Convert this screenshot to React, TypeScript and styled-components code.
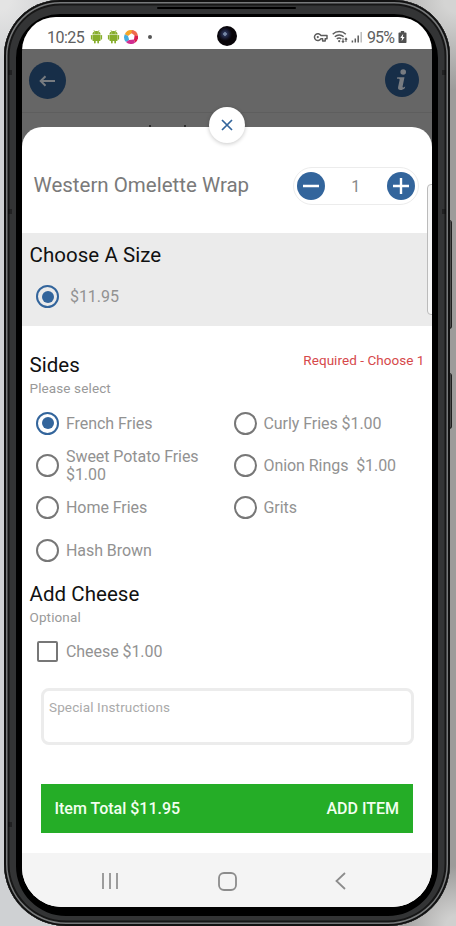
import React, { useState } from "react";
import styled, { createGlobalStyle } from "styled-components";

const blue = "#33659c";

const GlobalStyle = createGlobalStyle`
  * { box-sizing: border-box; }
  body {
    margin: 0;
    width: 456px;
    height: 926px;
    overflow: hidden;
    font-family: Roboto, "Liberation Sans", sans-serif;
    background: #cfd0d1;
  }
  button { font: inherit; border: 0; padding: 0; cursor: pointer; }
`;

const Backdrop = styled.div`
  position: relative;
  width: 456px;
  height: 926px;
  padding: 0 6px 0 4px;
  overflow: hidden;
  background: linear-gradient(90deg, #cfd1d3 0 50%, #9c9b9a 50%);
  &::before {
    content: "";
    position: absolute;
    inset: 0;
    background:
      radial-gradient(circle at 100% 0, #d4d4d3 12px, transparent 90px),
      radial-gradient(circle at 100% 100%, #d0d0cf 10px, transparent 60px),
      radial-gradient(circle at 0 0, #e4e4e4 10px, transparent 60px);
  }
`;

const Phone = styled.div`
  position: relative;
  width: 446px;
  height: 926px;
  padding: 17px 18px 19px;
  border-radius: 56px 56px 62px 62px;
  background: #000;
  box-shadow:
    inset 0 0 0 2px #111,
    inset 0 0 0 3.5px #77797a,
    inset 0 0 0 5.5px #161616,
    inset 0 2px 0 12px #333435;
`;

const Speaker = styled.span`
  position: absolute;
  left: 153px;
  top: 7px;
  width: 139px;
  height: 2px;
  border-radius: 2px;
  background: #000;
`;

const SideKey = styled.span<{ $top: number; $height: number }>`
  position: absolute;
  left: 448px;
  top: ${(p) => p.$top}px;
  width: 4px;
  height: ${(p) => p.$height}px;
  border-radius: 0 3px 3px 0;
  border: 1px solid #1d1d1d;
  border-left: 2px solid #080808;
  background: #4c4c4c;
`;

const Seam = styled.span<{ $left: number; $top: number }>`
  position: absolute;
  left: ${(p) => p.$left}px;
  top: ${(p) => p.$top}px;
  width: 4px;
  height: 5px;
  background: rgba(10, 10, 10, 0.45);
`;

const Screen = styled.div`
  position: relative;
  display: flex;
  flex-direction: column;
  width: 410px;
  height: 890px;
  border-radius: 34px 34px 40px 40px;
  overflow: hidden;
  background: #666;
`;

const StatusBar = styled.header`
  display: flex;
  justify-content: space-between;
  height: 32px;
  padding: 5px 25px 0 25px;
  background: #fff;
  color: #606060;
`;

const StatusGroup = styled.div`
  display: flex;
  align-items: center;
  height: 30px;
`;

const StatusText = styled.span<{ $track?: number }>`
  font-size: 16px;
  letter-spacing: ${(p) => p.$track ?? 0}px;
`;

const Camera = styled.span`
  position: absolute;
  left: 195px;
  top: 9px;
  width: 20px;
  height: 20px;
  border-radius: 50%;
  background: radial-gradient(circle at 8px 8px, #7688a5 0 1.5px, #2a3458 2px, #131425 5px, #080509 7px);
`;

const AppBar = styled.div`
  display: flex;
  flex: none;
  justify-content: space-between;
  height: 64px;
  padding: 13px 13.5px 0 7px;
  border-bottom: 1px solid #5e5e5e;
`;

const RoundButton = styled.button<{ $size: number; $tone: string }>`
  display: flex;
  flex: none;
  align-items: center;
  justify-content: center;
  width: ${(p) => p.$size}px;
  height: ${(p) => p.$size}px;
  border-radius: 50%;
  background: ${(p) => p.$tone};
`;

const InfoButton = styled(RoundButton)`
  margin-top: 1px;
`;

/* The page behind the sheet, with the tops of its heading's letters showing. */
const PageStrip = styled.div`
  display: flex;
  flex: none;
  align-items: flex-end;
  gap: 33px;
  height: 14px;
  padding: 0 0 0 127px;
`;

const LetterTop = styled.span`
  width: 2px;
  height: 2px;
  background: #2c2c2c;
`;

const Sheet = styled.main`
  position: relative;
  display: flex;
  flex: 1;
  flex-direction: column;
  border-radius: 20px 20px 0 0;
  background: #fff;
`;

const CloseButton = styled(RoundButton)`
  position: absolute;
  left: 187px;
  top: -20px;
  box-shadow: 0 1px 4px rgba(0, 0, 0, 0.22);
`;

const EdgePanel = styled.span`
  position: absolute;
  right: -3px;
  top: 57px;
  width: 8px;
  height: 131px;
  border: 1px solid #bbb;
  border-radius: 4px 0 0 4px;
  background: #f6f6f6;
`;

const TitleRow = styled.div`
  display: flex;
  align-items: center;
  justify-content: space-between;
  height: 105.5px;
  padding: 13px 13.5px 0 11.5px;
`;

const ItemTitle = styled.h1`
  margin: 0;
  padding-bottom: 3px;
  color: #7a7a7a;
  font-size: 20.5px;
  font-weight: 400;
  white-space: nowrap;
`;

const Stepper = styled.div`
  display: flex;
  align-items: center;
  justify-content: space-between;
  width: 125.5px;
  height: 38px;
  padding: 0 3px;
  border: 1px solid #ececec;
  border-radius: 19px;
  color: #888;
  font-size: 16px;
`;

const SizeSection = styled.section`
  height: 93.5px;
  padding: 10.5px 7.5px 0;
  background: #ebebeb;
`;

const Section = styled.section<{ $gap: number }>`
  padding: ${(p) => p.$gap}px 7.5px 0;
`;

const SectionHead = styled.div`
  display: flex;
  justify-content: space-between;
`;

const Heading = styled.h2`
  margin: 0;
  color: #111;
  font-size: 20.5px;
  line-height: 24px;
  font-weight: 400;
  letter-spacing: 0.05px;
`;

const Required = styled.span`
  color: #d6494b;
  font-size: 13.5px;
  line-height: 15px;
  letter-spacing: 0.05px;
`;

const Hint = styled.p`
  margin: 3px 0 0;
  color: #999;
  font-size: 13.5px;
  line-height: 16px;
  letter-spacing: 0.12px;
`;

const OptionGrid = styled.div`
  display: grid;
  grid-template-columns: 197.5px 1fr;
  grid-auto-rows: 42.3px;
  margin-top: 6px;
`;

const Option = styled.label<{ $gap?: number }>`
  display: flex;
  align-items: center;
  gap: ${(p) => p.$gap ?? 7}px;
  padding-left: 6.5px;
  color: #929292;
  font-size: 16px;
  line-height: 18.5px;
  letter-spacing: -0.06px;
  cursor: pointer;
`;

const OptionText = styled.span`
  padding-top: 2px;
  white-space: pre;
`;

const Radio = styled.span<{ $on: boolean }>`
  display: flex;
  flex: none;
  align-items: center;
  justify-content: center;
  width: 23px;
  height: 23px;
  border: 2px solid ${(p) => (p.$on ? blue : "#777")};
  border-radius: 50%;
  &::after {
    content: "";
    width: 12px;
    height: 12px;
    border-radius: 50%;
    background: ${(p) => (p.$on ? blue : "transparent")};
  }
`;

const SizeOption = styled(Option)`
  height: 23px;
  margin-top: 18px;
`;

const CheckOption = styled(Option)`
  height: 22px;
  margin-top: 15.5px;
`;

const Checkbox = styled.span`
  width: 21px;
  height: 21px;
  margin: 0 1px;
  border: 2px solid #777;
  border-radius: 2px;
`;

const Notes = styled.textarea`
  display: block;
  width: 373px;
  height: 57px;
  margin: 26px 0 0 18.5px;
  padding: 8px 5.5px;
  border: 3px solid #ececec;
  border-radius: 8px;
  outline: 0;
  resize: none;
  background: #fff;
  font: 13.5px/16px Roboto, sans-serif;
  letter-spacing: 0.13px;
  &::placeholder { color: #aaa; opacity: 1; }
`;

const TotalButton = styled.button`
  display: flex;
  align-items: center;
  justify-content: space-between;
  width: 372.5px;
  height: 49px;
  margin: 38.5px 0 0 18.5px;
  padding: 1px 14px 0;
  background: #25ad27;
  color: #f2fff0;
  font-size: 16px;
  font-weight: 500;
`;

const NavBar = styled.nav`
  display: flex;
  align-items: center;
  justify-content: space-between;
  height: 54px;
  margin-top: auto;
  padding: 2px 86px 0 79px;
  background: #f4f4f4;
`;

const Android = () => (
  <svg width="13" height="14" viewBox="0 0 13 14" fill="#86ad2b">
    <path d="M2.4 4.5a4.1 3.6 0 0 1 8.2 0zM2.4 5h8.2v5.2a.8.8 0 0 1-.8.8H3.2a.8.8 0 0 1-.8-.8z" />
    <rect x=".9" y="5" width="1.2" height="4.6" rx=".6" />
    <rect x="10.9" y="5" width="1.2" height="4.6" rx=".6" />
    <rect x="4" y="10" width="1.7" height="3.6" rx=".8" />
    <rect x="7.3" y="10" width="1.7" height="3.6" rx=".8" />
    <path d="M3.8 0l1 1.8M9.2 0l-1 1.8" stroke="#86ad2b" strokeWidth=".6" />
    <circle cx="4.8" cy="3" r=".45" fill="#fff" />
    <circle cx="8.2" cy="3" r=".45" fill="#fff" />
  </svg>
);

const Swirl = () => (
  <svg width="14" height="14" viewBox="0 0 14 14">
    <path d="M7 0A7 7 0 0 0 .8 4.2L4 6l4-3 2-2.4A7 7 0 0 0 7 0z" fill="#f5a62a" />
    <path d="M.8 4.2A7 7 0 0 0 2 12l3.2-2L4 6z" fill="#45aee0" />
    <path d="M2 12a7 7 0 0 0 9 .7L10 9.5 5.2 10z" fill="#d02d91" />
    <path d="M11 12.7A7 7 0 0 0 14 6l-3.3-1.4L10 9.5z" fill="#d91e4f" />
    <path d="M14 6A7 7 0 0 0 8 0l-.7 3 3.4 2.6z" fill="#ef6b4c" />
    <circle cx="7.2" cy="6.8" r="2.4" fill="#fff" />
  </svg>
);

const IconStrip = styled.div`
  display: flex;
  align-items: center;
  gap: 4px;
  margin-left: 6px;
`;

const Dot = styled.span`
  width: 4px;
  height: 4px;
  margin-left: 6px;
  border-radius: 50%;
  background: #555;
`;

const StatusIcons = () => (
  <svg width="54" height="16" viewBox="0 0 54 16" fill="none" stroke="#5c5c5c" strokeWidth="1.5">
    <path d="M7.8 6.4A3.4 3.4 0 1 0 7.8 9.8H9.6V12H12.2V9.8H14V6.4z" strokeLinejoin="round" />
    <circle cx="4.8" cy="8.1" r="1.1" fill="#5c5c5c" stroke="none" />
    <path d="M19.7 5.2a9.5 9.5 0 0 1 13.1 0M21.8 7.7a6.4 6.4 0 0 1 8.8 0M23.8 10a3.4 3.4 0 0 1 4.5 0" />
    <circle cx="26.2" cy="12.2" r="1.1" fill="#5c5c5c" stroke="none" />
    <path d="M30 9.2v4M28.8 12l1.2 1.4L31.2 12M33 13V9.4M31.8 10.6L33 9.2l1.2 1.4" strokeWidth="1.1" />
    <path d="M39.4 11.5v2M42.3 9.5v4M45.2 6.5v7" strokeWidth="1.5" />
    <path d="M48.2 3v10.5" stroke="#bbb" strokeWidth="1.5" />
  </svg>
);

const BatteryIcon = styled.svg`
  margin-left: 4px;
`;

const Battery = () => (
  <BatteryIcon width="9" height="14" viewBox="0 0 9 14">
    <path d="M2.8 1h3.4v1.4h1.5q.8 0 .8.8v9q0 .8-.8.8H1.3q-.8 0-.8-.8v-9q0-.8.8-.8h1.5z" fill="#515151" />
    <path d="M5.2 3.8L2.3 8.1h1.8l-.5 3.2 3-4.4H4.8z" fill="#fff" />
  </BatteryIcon>
);

const sides = [
  "French Fries",
  "Curly Fries $1.00",
  "Sweet Potato Fries\n$1.00",
  "Onion Rings  $1.00",
  "Home Fries",
  "Grits",
  "Hash Brown",
];

export default function App() {
  const [side, setSide] = useState(0);
  const [count, setCount] = useState(1);

  return (
    <>
      <GlobalStyle />
      <Backdrop>
        <SideKey $top={220} $height={109} />
        <SideKey $top={373} $height={56} />
        <Phone>
          <Speaker />
          <Seam $left={4} $top={70} />
          <Seam $left={4} $top={209} />
          <Seam $left={438} $top={70} />
          <Seam $left={438} $top={209} />
          <Seam $left={4} $top={822} />
          <Screen>
            <StatusBar>
              <StatusGroup>
                <StatusText $track={-0.55}>10:25</StatusText>
                <IconStrip>
                  <Android />
                  <Android />
                  <Swirl />
                  <Dot />
                </IconStrip>
              </StatusGroup>
              <StatusGroup>
                <StatusIcons />
                <StatusText $track={-0.9}>95%</StatusText>
                <Battery />
              </StatusGroup>
              <Camera />
            </StatusBar>
            <AppBar>
              <RoundButton $size={37} $tone="#172e48" aria-label="Back">
                <svg width="17" height="12" viewBox="0 0 17 12" fill="none" stroke="#777b80" strokeWidth="2">
                  <path d="M16 6H2M6.5 1.2L1.7 6l4.8 4.8" />
                </svg>
              </RoundButton>
              <InfoButton $size={34} $tone="#172e48" aria-label="Information">
                <svg width="14" height="24" viewBox="0 0 14 24" fill="#777b80">
                  <circle cx="8.2" cy="4" r="2.8" />
                  <path d="M2.2 9.2h7.3L7.6 18.6q-.2 1.2.8.9l1.8-1-.4 1.8c-1.4 1-2.7 1.8-4.3 1.8-2 0-2.8-1.2-2.4-3l1.5-7.2q.2-1.1-.9-1.1H1.9z" />
                </svg>
              </InfoButton>
            </AppBar>
            <PageStrip>
              <LetterTop />
              <LetterTop />
            </PageStrip>
            <Sheet>
              <CloseButton $size={36} $tone="#fff" aria-label="Close">
                <svg width="12" height="12" viewBox="0 0 12 12" stroke={blue} strokeWidth="1.7">
                  <path d="M1 1l10 10M11 1L1 11" />
                </svg>
              </CloseButton>
              <TitleRow>
                <ItemTitle>Western Omelette Wrap</ItemTitle>
                <Stepper>
                  <RoundButton $size={28} $tone={blue} aria-label="Less" onClick={() => setCount(Math.max(1, count - 1))}>
                    <svg width="16" height="16" stroke="#fff" strokeWidth="2.4"><path d="M0 8h16" /></svg>
                  </RoundButton>
                  {count}
                  <RoundButton $size={28} $tone={blue} aria-label="More" onClick={() => setCount(count + 1)}>
                    <svg width="16" height="16" stroke="#fff" strokeWidth="2.4"><path d="M0 8h16M8 0v16" /></svg>
                  </RoundButton>
                </Stepper>
              </TitleRow>
              <SizeSection>
                <Heading>Choose A Size</Heading>
                <SizeOption $gap={11}>
                  <Radio $on />
                  <OptionText>$11.95</OptionText>
                </SizeOption>
              </SizeSection>
              <Section $gap={27}>
                <SectionHead>
                  <Heading>Sides</Heading>
                  <Required>Required - Choose 1</Required>
                </SectionHead>
                <Hint>Please select</Hint>
                <OptionGrid>
                  {sides.map((label, i) => (
                    <Option key={label} onClick={() => setSide(i)}>
                      <Radio $on={i === side} />
                      <OptionText>{label}</OptionText>
                    </Option>
                  ))}
                </OptionGrid>
              </Section>
              <Section $gap={10.6}>
                <Heading>Add Cheese</Heading>
                <Hint>Optional</Hint>
                <CheckOption>
                  <Checkbox />
                  <OptionText>Cheese $1.00</OptionText>
                </CheckOption>
              </Section>
              <Notes placeholder="Special Instructions" />
              <TotalButton>
                <span>Item Total $11.95</span>
                <span>ADD ITEM</span>
              </TotalButton>
              <NavBar>
                <svg width="18" height="18" stroke="#8c8c8c" strokeWidth="1.7"><path d="M2 1v16M9 1v16M16 1v16" /></svg>
                <svg width="19" height="19" fill="none" stroke="#8c8c8c" strokeWidth="1.8"><rect x="1" y="1" width="17" height="17" rx="5" /></svg>
                <svg width="11" height="18" fill="none" stroke="#8c8c8c" strokeWidth="1.8"><path d="M10 1L1.5 9l8.5 8" /></svg>
              </NavBar>
              <EdgePanel />
            </Sheet>
          </Screen>
        </Phone>
      </Backdrop>
    </>
  );
}
